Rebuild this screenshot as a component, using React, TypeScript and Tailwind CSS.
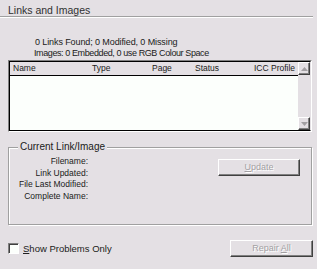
import React from "react";

const disabledText = "text-[#a3a0a3] [text-shadow:1px_1px_0_#ffffff]";

function Arrow({ up }: { up: boolean }) {
  return (
    <svg width="7" height="4" viewBox="0 0 7 4" className="block">
      {up ? (
        <polygon points="0,4 7,4 3.5,0" fill="#a3a0a3" />
      ) : (
        <polygon points="0,0 7,0 3.5,4" fill="#a3a0a3" />
      )}
    </svg>
  );
}

function ScrollButton({ up }: { up: boolean }) {
  return (
    <div className="h-[13px] w-full flex items-center justify-center border border-t-white border-l-white border-r-[#404040] border-b-[#404040] shadow-[inset_-1px_-1px_0_#808080] bg-[#e4e0e4]">
      <Arrow up={up} />
    </div>
  );
}

function Btn({ children, w }: { children: React.ReactNode; w: string }) {
  return (
    <div
      className={`${w} h-[17px] flex items-center justify-center border border-t-white border-l-white border-r-[#404040] border-b-[#404040] shadow-[inset_-1px_-1px_0_#808080] text-[9px] ${disabledText}`}
    >
      {children}
    </div>
  );
}

export default function App() {
  return (
    <div
      className="w-[317px] h-[269px] bg-[#e4e0e4] flex flex-col text-black overflow-hidden"
      style={{ fontFamily: '"Liberation Sans", Arial, sans-serif' }}
    >
      {/* Title */}
      <div className="pt-[4px] h-[16px] pl-[8px] text-[10.5px] leading-[12px] text-[#303030]">
        Links and Images
      </div>
      <div className="w-[313px] h-[2px] border-t border-t-[#a0a0a0] border-b border-b-white" />

      {/* Info */}
      <div className="mt-[19px] pl-[35px] text-[9px] leading-[11px] text-[#202020]">
        <div className="tracking-[-0.1px]">0 Links Found; 0 Modified, 0 Missing</div>
        <div className="-ml-[1px] tracking-[-0.4px]">Images: 0 Embedded, 0 use RGB Colour Space</div>
      </div>

      {/* List */}
      <div className="mt-[1px] ml-[8px] w-[304px] h-[72px] border border-t-[#808080] border-l-[#808080] border-r-white border-b-white">
        <div className="w-full h-full border border-black border-r-[#e4e0e4] border-b-black flex">
          <div className="flex-1 flex flex-col">
            <div className="h-[14px] border-b border-b-black bg-[#e4e0e4] flex items-center pl-[3px] text-[8.5px] leading-[13px] text-[#202020]">
              <div className="w-[79px]">Name</div>
              <div className="w-[60px]">Type</div>
              <div className="w-[43px]">Page</div>
              <div className="w-[59px]">Status</div>
              <div>ICC Profile</div>
            </div>
            <div className="flex-1 bg-[#fcfffc]" />
          </div>
          <div className="w-[12px] flex flex-col bg-[#e4e0e4]">
            <ScrollButton up />
            <div className="flex-1" />
            <ScrollButton up={false} />
          </div>
        </div>
      </div>

      {/* Group box */}
      <div className="relative mt-[15px] ml-[8px] w-[304px] h-[78px] border border-[#a0a0a0] shadow-[1px_1px_0_#ffffff,inset_1px_1px_0_#ffffff]">
        <span className="absolute -top-[7px] left-[9px] px-[2px] bg-[#e4e0e4] text-[10px] leading-[12px] text-[#202020]">
          Current Link/Image
        </span>
        <div className="flex pt-[8px]">
          <div className="w-[79px] text-right text-[8.5px] leading-[11.6px] text-[#202020]">
            <div>Filename:</div>
            <div>Link Updated:</div>
            <div>File Last Modified:</div>
            <div>Complete Name:</div>
          </div>
          <div className="ml-[130px] mt-[3px]">
            <Btn w="w-[82px]">
              <span>
                <span className="underline">U</span>pdate
              </span>
            </Btn>
          </div>
        </div>
      </div>

      {/* Bottom row */}
      <div className="mt-[15px] h-[17px] flex items-center justify-between pr-[4px]">
        <div className="flex items-center ml-[8px]">
          <div className="w-[11px] h-[11px] bg-[#fcfffc] border border-t-[#808080] border-l-[#808080] border-r-white border-b-white shadow-[inset_1px_1px_0_#404040]" />
          <span className="ml-[4px] text-[9.5px] leading-[11px] text-[#202020]">
            <span className="underline">S</span>how Problems Only
          </span>
        </div>
        <Btn w="w-[83px]">
          <span>
            Repair <span className="underline">A</span>ll
          </span>
        </Btn>
      </div>
    </div>
  );
}
